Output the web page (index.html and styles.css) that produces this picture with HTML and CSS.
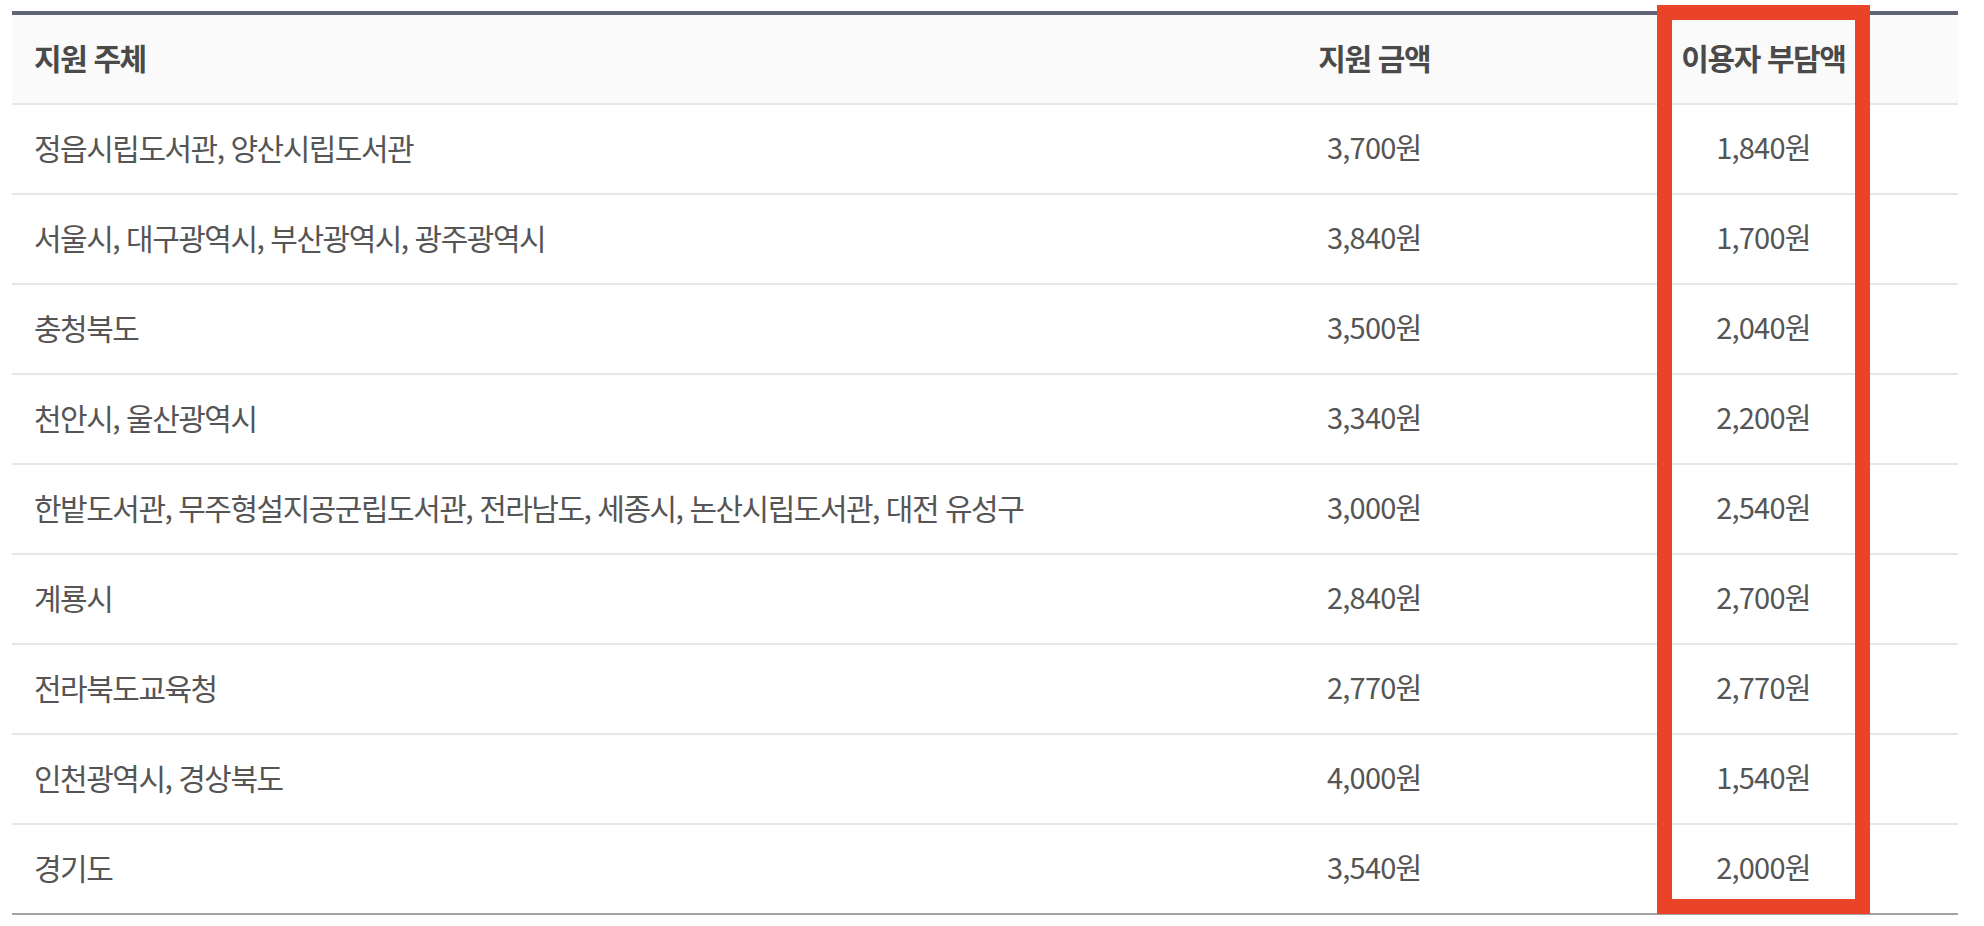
FILE: index.html
```html
<!DOCTYPE html>
<html lang="ko">
<head>
  <meta charset="UTF-8" />
  <meta name="viewport" content="width=device-width, initial-scale=1.0"/>
  <title>지원 금액 안내</title>
  <link rel="stylesheet" href="styles.css">
</head>
<body>

  <div class="wrap">
    <table class="support">
      <thead>
        <tr>
          <th class="who">지원 주체</th>
          <th class="num">지원 금액</th>
          <th class="num">이용자 부담액</th>
        </tr>
      </thead>
      <tbody>
        <tr><td class="who">정읍시립도서관, 양산시립도서관</td><td class="num">3,700원</td><td class="num">1,840원</td></tr>
        <tr><td class="who">서울시, 대구광역시, 부산광역시, 광주광역시</td><td class="num">3,840원</td><td class="num">1,700원</td></tr>
        <tr><td class="who">충청북도</td><td class="num">3,500원</td><td class="num">2,040원</td></tr>
        <tr><td class="who">천안시, 울산광역시</td><td class="num">3,340원</td><td class="num">2,200원</td></tr>
        <tr><td class="who">한밭도서관, 무주형설지공군립도서관, 전라남도, 세종시, 논산시립도서관, 대전 유성구</td><td class="num">3,000원</td><td class="num">2,540원</td></tr>
        <tr><td class="who">계룡시</td><td class="num">2,840원</td><td class="num">2,700원</td></tr>
        <tr><td class="who">전라북도교육청</td><td class="num">2,770원</td><td class="num">2,770원</td></tr>
        <tr><td class="who">인천광역시, 경상북도</td><td class="num">4,000원</td><td class="num">1,540원</td></tr>
        <tr><td class="who">경기도</td><td class="num">3,540원</td><td class="num">2,000원</td></tr>
      </tbody>
    </table>
    <!-- 강조 표시 -->
    <div class="highlight"></div>
  </div>

</body>
</html>
```

FILE: styles.css
```css
body {
  margin: 0;
  background: #fff;
  font-family: "Noto Sans CJK KR", "Noto Sans", sans-serif;
  color: #555;
}
.wrap {
  position: relative;
  width: 1946px;
  margin: 11px 0 0 12px;
}
.support {
  width: 100%;
  border-collapse: collapse;
  border-top: 4px solid #5f6477;
  border-bottom: 2px solid #a3a3a3;
}
.support th,
.support td {
  height: 83px;
  padding: 0 22px 5px;
  line-height: 1.4;
  border-bottom: 2px solid #e6e6e6;
  vertical-align: middle;
}
.support tbody tr:last-child td {
  border-bottom: none;
}
.support thead tr {
  background: #fafafa;
}
.support th {
  font-size: 30px;
  font-weight: 700;
  color: #4a4a4a;
  letter-spacing: -1.4px;
}
.support td {
  font-size: 30px;
  letter-spacing: -1.5px;
}
.who {
  text-align: left;
}
.num {
  width: 20%;
  text-align: center;
}
.support .num {
  padding-left: 0;
  padding-right: 0;
}
.support td.num {
  font-size: 29px;
  letter-spacing: -0.8px;
}
.highlight {
  position: absolute;
  left: 1645px;
  top: -6px;
  width: 183px;
  height: 879px;
  border: 15px solid #e94428;
}
```
